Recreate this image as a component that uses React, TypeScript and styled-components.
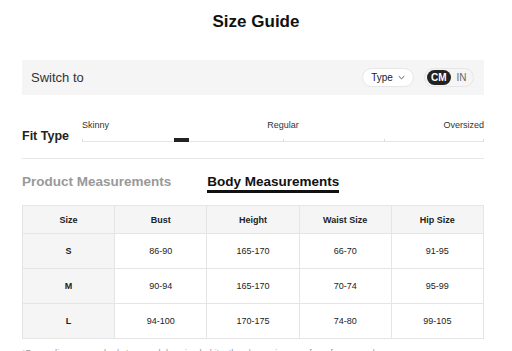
import React from "react";
import styled, { createGlobalStyle } from "styled-components";

const GlobalStyle = createGlobalStyle`
  body {
    margin: 0;
    background: #fff;
    font-family: "Liberation Sans", Arial, sans-serif;
    color: #222;
  }
`;

const Page = styled.div`
  width: 512px;
  height: 351px;
  overflow: hidden;
  padding: 0 28px 0 22px;
  box-sizing: border-box;
`;

const Title = styled.h1`
  margin: 0 -28px 0 -22px;
  padding-top: 12px;
  font-size: 17px;
  line-height: 20px;
  font-weight: 700;
  text-align: center;
  color: #111;
`;

const SwitchBar = styled.div`
  margin-top: 28px;
  height: 35px;
  background: #f5f5f5;
  display: flex;
  align-items: center;
  padding: 0 10px 0 9px;
`;

const SwitchLabel = styled.span`
  flex: 1;
  font-size: 13px;
  color: #333;
`;

const Controls = styled.div`
  display: flex;
  align-items: center;
  gap: 10px;
`;

const Pill = styled.div`
  height: 19px;
  box-sizing: border-box;
  border: 1px solid #e6e6e6;
  border-radius: 10px;
  display: flex;
  align-items: center;
`;

const TypePill = styled(Pill)`
  width: 52px;
  background: #fff;
  justify-content: center;
  gap: 5px;
  font-size: 10px;
  color: #222;
`;

const UnitToggle = styled(Pill)`
  width: 50px;
  padding: 0 2px;
  gap: 4px;
`;

const Unit = styled.span<{ $active?: boolean }>`
  height: 15px;
  padding: 0 ${(p) => (p.$active ? "4px" : "2px")};
  border-radius: 8px;
  display: flex;
  align-items: center;
  font-size: 10px;
  font-weight: ${(p) => (p.$active ? 700 : 400)};
  background: ${(p) => (p.$active ? "#222" : "transparent")};
  color: ${(p) => (p.$active ? "#fff" : "#666")};
`;

const FitRow = styled.div`
  display: flex;
  align-items: flex-end;
  padding-top: 24px;
`;

const FitLabel = styled.span`
  width: 60px;
  flex: none;
  font-size: 12.5px;
  line-height: 15px;
  font-weight: 700;
  color: #222;
  margin-bottom: -2px;
`;

const Slider = styled.div`
  flex: 1;
`;

const SliderLabels = styled.div`
  display: grid;
  grid-template-columns: 1fr auto 1fr;
  font-size: 9px;
  line-height: 12px;
  color: #333;
`;

const SliderLabel = styled.span<{ $align: "start" | "center" | "end" }>`
  justify-self: ${(p) => p.$align};
`;

const Track = styled.div`
  position: relative;
  margin-top: 10px;
  height: 1px;
  background: #e5e5e5;
`;

const Tick = styled.span`
  position: absolute;
  bottom: 0;
  width: 1px;
  height: 3px;
  background: #ddd;
`;

const Thumb = styled.span`
  position: absolute;
  top: -3px;
  width: 15px;
  height: 4px;
  background: #222;
`;

const Divider = styled.div`
  margin-top: 16px;
  height: 1px;
  background: #e8e8e8;
`;

const Tabs = styled.div`
  display: flex;
  gap: 36px;
  margin-top: 14px;
`;

const Tab = styled.span<{ $active?: boolean }>`
  font-size: 13.5px;
  line-height: 17px;
  font-weight: 700;
  color: ${(p) => (p.$active ? "#111" : "#999")};
  border-bottom: 3px solid ${(p) => (p.$active ? "#111" : "transparent")};
`;

const Table = styled.table`
  margin-top: 12px;
  width: 100%;
  border-collapse: collapse;
  table-layout: fixed;
  font-size: 9px;
  color: #222;
  text-align: center;
`;

const HeadCell = styled.th`
  height: 27px;
  padding: 0;
  border: 1px solid #e5e5e5;
  background: #f5f5f5;
  font-weight: 700;
`;

const Cell = styled.td<{ $first?: boolean }>`
  height: 34px;
  padding: 0;
  border: 1px solid #e5e5e5;
  background: ${(p) => (p.$first ? "#f5f5f5" : "#fff")};
  font-weight: ${(p) => (p.$first ? 700 : 400)};
`;

const Note = styled.p`
  margin: 9px 0 0;
  font-size: 9px;
  color: #999;
`;

const headers = ["Size", "Bust", "Height", "Waist Size", "Hip Size"];

const rows = [
  ["S", "86-90", "165-170", "66-70", "91-95"],
  ["M", "90-94", "165-170", "70-74", "95-99"],
  ["L", "94-100", "170-175", "74-80", "99-105"],
];

const Chevron = () => (
  <svg width="7" height="5" viewBox="0 0 7 5" fill="none">
    <path d="M0.8 1.2l2.7 2.6 2.7-2.6" stroke="#444" strokeWidth="0.9" />
  </svg>
);

const App: React.FC = () => {
  return (
    <Page>
      <GlobalStyle />
      <Title>Size Guide</Title>
      <SwitchBar>
        <SwitchLabel>Switch to</SwitchLabel>
        <Controls>
          <TypePill>
            Type <Chevron />
          </TypePill>
          <UnitToggle>
            <Unit $active>CM</Unit>
            <Unit>IN</Unit>
          </UnitToggle>
        </Controls>
      </SwitchBar>
      <FitRow>
        <FitLabel>Fit Type</FitLabel>
        <Slider>
          <SliderLabels>
            <SliderLabel $align="start">Skinny</SliderLabel>
            <SliderLabel $align="center">Regular</SliderLabel>
            <SliderLabel $align="end">Oversized</SliderLabel>
          </SliderLabels>
          <Track>
            <Tick style={{ left: 0 }} />
            <Tick style={{ left: "50%" }} />
            <Tick style={{ left: "75%" }} />
            <Tick style={{ right: 0 }} />
            <Thumb style={{ left: "23%" }} />
          </Track>
        </Slider>
      </FitRow>
      <Divider />
      <Tabs>
        <Tab>Product Measurements</Tab>
        <Tab $active>Body Measurements</Tab>
      </Tabs>
      <Table>
        <thead>
          <tr>
            {headers.map((h) => (
              <HeadCell key={h}>{h}</HeadCell>
            ))}
          </tr>
        </thead>
        <tbody>
          {rows.map((r) => (
            <tr key={r[0]}>
              {r.map((v, i) => (
                <Cell key={i} $first={i === 0}>
                  {v}
                </Cell>
              ))}
            </tr>
          ))}
        </tbody>
      </Table>
      <Note>
        *Depending on your body type and dressing habits, the above sizes are
        for reference only.
      </Note>
    </Page>
  );
};

export default App;
